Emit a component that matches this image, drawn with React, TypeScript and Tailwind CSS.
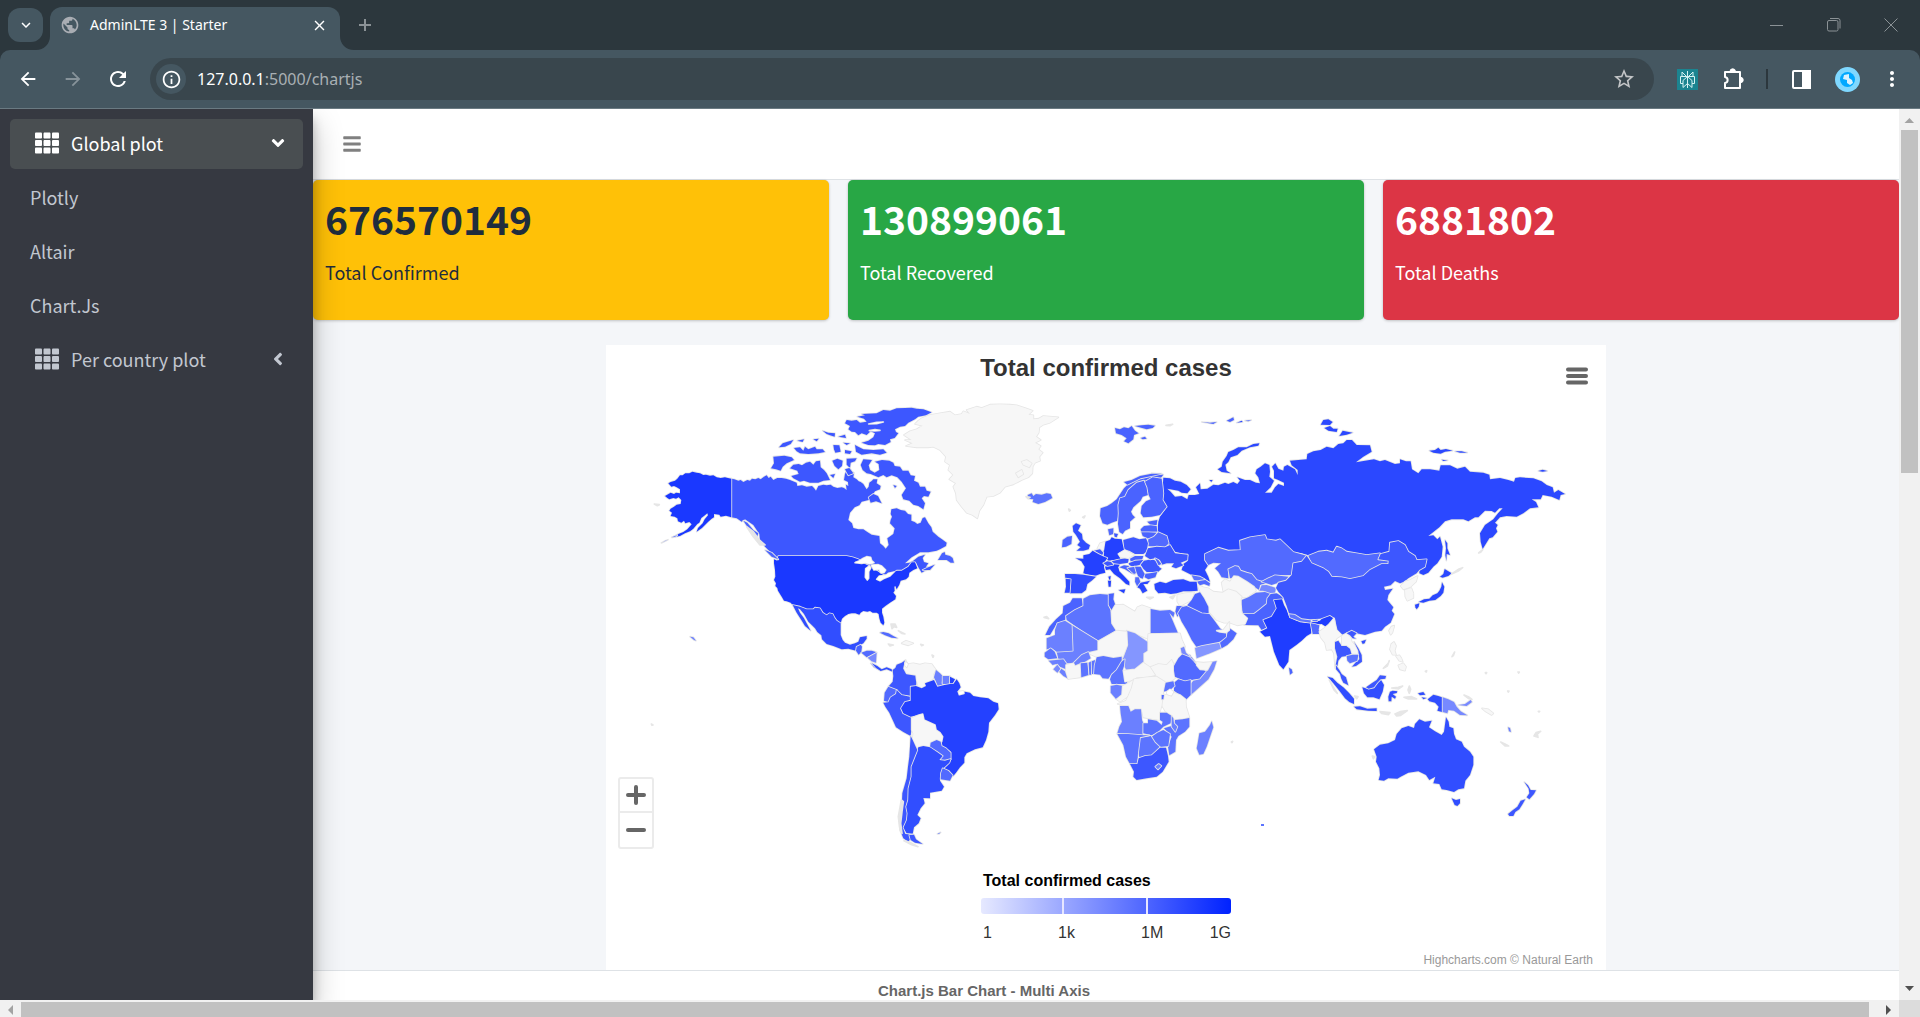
import React from "react";
import { FaAngleDown, FaAngleLeft, FaBars, FaTh } from "react-icons/fa";
import {
  MdArrowBack,
  MdArrowForward,
  MdClose,
  MdInfoOutline,
  MdKeyboardArrowDown,
  MdMoreVert,
  MdOutlineExtension,
  MdPublic,
  MdRefresh,
  MdStarBorder,
} from "react-icons/md";

/* ---------- world map data: one tile per region, three units to a pixel ---------- */

type Shape = [fill: string, points: string];
type Tile = { x: number; y: number; shapes: Shape[] };

const NONE = "#f7f7f7";
const SEA = "#ffffff";
const ISLE = "#e6e6e6";
const US = "#1a38ff";
const IN = "#1f3dff";
const BR = "#2441ff";
const RU = "#2b48ff";
const AU = "#314eff";
const CN = "#3d57ff";
const M1 = "#4a63ff";
const M2 = "#526aff";
const M3 = "#5c74ff";
const M4 = "#6b80ff";
const M5 = "#7789ff";
const M6 = "#8496ff";

const TILES: Tile[] = [
  {
    x: 600,
    y: 390,
    shapes: [
      [CN, "394,266 403,268 415,272 422,270 430,276 442,270 450,272 456,266 466,268 475,264 482,268 492,260 500,256 506,264 512,260 520,270 532,264 545,264 558,266 570,270 590,278 592,288 606,286 620,290 636,288 642,294 648,302 655,288 670,284 680,286 692,284 700,290 712,294 725,292 732,294 740,300 738,284 745,288 744,276 732,270 735,252 740,240 750,234 754,244 762,248 760,262 770,268 776,274 782,276 790,282 796,292 800,298 806,290 808,278 816,272 820,268 832,268 830,280 842,288 840,298 825,304 815,318 806,330 785,335 778,346 764,352 750,368 745,390 756,400 760,414 775,418 790,418 802,426 815,434 838,438 840,460 850,468 857,476 866,465 862,445 880,432 884,415 870,400 872,390 876,380 872,372 874,358 890,355 902,360 915,362 924,372 934,374 934,392 944,396 952,402 962,398 968,384 975,382 985,400 994,412 998,425 1015,440 1026,448 1040,458 1038,468 1020,478 1010,482 985,487 960,487 948,494 935,502 915,520 928,518 940,512 955,500 975,494 968,504 972,516 985,520 978,530 990,532 1000,526 992,538 975,542 965,548 955,532 948,518 940,530 915,540 880,550 840,570 700,540 535,508 515,490 495,470 480,450 478,432 460,405 435,388 425,395 410,385 394,382"],
      [US, "394,266 384,264 375,262 362,264 350,262 340,256 330,257 318,254 310,255 300,250 290,248 277,245 268,250 256,250 248,256 240,256 232,266 225,272 212,276 205,280 214,290 222,288 230,292 240,298 240,310 228,308 222,312 212,308 195,318 202,324 208,328 220,324 228,326 236,322 244,330 242,342 230,344 222,350 212,356 208,362 216,368 212,378 224,380 232,385 234,394 244,398 252,392 256,400 268,396 275,403 262,418 250,426 235,432 218,442 240,438 255,430 270,424 280,416 292,402 298,398 304,384 312,378 322,370 324,376 314,388 308,400 294,414 290,425 306,414 318,402 324,396 335,386 342,382 342,372 358,374 362,380 378,377 394,382"],
      [US, "535,498 740,498 758,502 775,508 795,522 812,530 850,555 870,555 890,542 905,542 925,530 935,517 945,517 952,535 940,540 928,548 926,560 918,568 902,572 898,584 890,598 886,588 883,590 884,602 880,608 888,618 886,628 870,638 856,648 846,656 846,668 850,680 853,698 850,706 842,698 838,685 836,672 830,668 818,668 810,663 802,665 790,663 782,668 778,674 766,670 755,670 745,672 735,678 726,686 722,700 710,692 704,684 698,672 688,670 680,676 668,668 660,655 645,653 640,658 620,658 600,650 578,645 572,638 560,634 552,632 546,622 540,612 534,602 532,594 526,588 528,580 522,570 526,560 525,540 522,520 522,508 532,512"],
      [SEA, "765,518 778,512 790,505 800,500 812,502 815,512 822,518 808,522 796,518 785,520"],
      [SEA, "797,536 808,528 812,534 806,545 806,565 802,570 796,562"],
      [SEA, "814,525 835,524 845,528 857,540 852,548 842,548 838,538 822,540"],
      [SEA, "830,568 838,558 858,556 865,550 882,546 870,558 850,566 840,572"],
      [AU, "578,645 600,650 620,658 640,658 645,653 660,655 668,668 680,676 688,670 698,672 704,684 710,692 722,700 722,715 722,735 728,750 735,758 750,764 765,760 775,755 780,742 800,738 800,746 790,760 776,768 770,768 768,782 745,776 725,778 700,768 680,762 666,748 664,736 652,726 645,715 636,706 625,695 612,672 600,658 594,655 600,668 612,685 620,700 632,722 615,708 604,690 590,668"],
      [M1, "768,782 770,770 782,764 786,770 784,786 776,794"],
      [M2, "784,788 800,782 815,782 830,787 812,796 800,802"],
      [M5, "803,803 830,788 828,818 815,814"],
      [AU, "812,820 826,824 835,834 848,838 838,840 822,832"],
      [M2, "840,728 850,726 866,730 880,738 893,745 875,743 855,736"],
      [NONE, "905,760 918,752 940,760 925,766"],
      [ISLE, "873,702 885,702 890,712 882,710 876,716"],
      [ISLE, "895,722 915,732 905,730"],
      [ISLE, "865,762 880,765 870,768"],
      [CN, "772,80 795,76 785,72 830,70 850,60 870,62 890,55 915,54 935,53 950,56 970,58 995,67 978,76 955,80 945,88 925,98 915,108 900,110 885,118 888,126 895,130 884,144 870,148 872,156 855,165 835,162 825,166 805,165 785,158 805,152 820,142 825,130 812,124 800,135 785,130 775,136 765,126 755,125 745,118 750,108 735,100 740,90 755,92 770,90 780,98 800,95 792,86"],
      [SEA, "806,102 830,97 850,96 830,101"],
      [SEA, "808,122 825,119 840,121 825,123"],
      [CN, "765,165 775,170 790,178 820,180 850,178 860,188 840,194 815,190 785,194 768,185"],
      [CN, "735,180 755,184 750,192 735,190"],
      [CN, "700,165 718,166 722,185 706,188 702,178"],
      [CN, "730,158 750,160 740,165"],
      [CN, "582,174 600,172 610,182 615,170 625,178 645,170 650,178 668,178 675,186 655,190 625,192 600,190 590,184"],
      [CN, "537,172 548,160 560,156 580,150 572,162 555,170"],
      [CN, "592,152 612,148 608,156"],
      [CN, "640,148 656,146 650,154"],
      [CN, "668,122 685,128 705,130 704,140 690,136 680,132"],
      [CN, "715,140 735,134 738,144"],
      [CN, "520,200 553,197 575,202 582,210 560,220 548,230 542,242 528,238 513,235 522,220"],
      [CN, "570,235 580,224 596,222 606,226 618,218 630,215 640,224 648,214 660,212 662,232 672,240 680,250 690,270 670,272 655,278 630,278 612,272 600,275 580,265 574,258 596,252 592,242"],
      [CN, "697,212 712,206 728,212 726,228 715,238 704,228"],
      [CN, "740,206 770,205 765,214 752,218 750,234 740,224"],
      [CN, "735,238 748,234 760,250 745,256"],
      [CN, "690,255 705,252 700,264"],
      [CN, "790,208 816,210 806,226 810,240 824,248 838,240 836,222 825,215 846,210 868,212 880,218 884,228 900,230 908,242 925,242 932,256 945,258 942,272 955,278 960,290 975,290 980,302 992,305 985,320 972,318 965,325 975,340 970,358 955,348 940,344 928,332 910,328 905,315 918,295 905,275 892,262 875,256 860,262 850,255 835,262 812,252 800,250 788,240 782,225"],
      [CN, "806,322 820,312 834,318 845,340 828,334 812,338"],
      [CN, "880,285 890,288 885,294"],
      [M1, "1014,510 1026,490 1034,486 1036,494 1050,498 1058,504 1062,518 1052,518 1040,510"],
      [CN, "968,540 985,532 1004,524 990,540"],
      [NONE, "912,135 930,124 950,118 968,107 945,102 955,92 965,85 990,75 1020,70 1050,65 1065,76 1085,72 1090,64 1110,72 1100,60 1130,50 1145,54 1170,44 1200,43 1230,44 1250,46 1275,54 1298,62 1285,74 1300,76 1300,88 1316,86 1330,78 1375,82 1350,98 1330,104 1318,112 1316,128 1308,140 1322,150 1305,158 1322,168 1315,178 1328,188 1318,200 1320,212 1305,218 1298,230 1297,250 1285,262 1265,270 1240,283 1215,290 1200,308 1180,318 1160,320 1150,345 1138,362 1132,385 1118,375 1100,368 1085,350 1070,330 1068,310 1060,290 1068,280 1048,268 1060,255 1045,240 1050,225 1035,215 1038,200 1020,180 1000,170 985,172 950,172 918,168 938,160 915,150 935,150"],
      [NONE, "1265,215 1280,210 1295,220 1288,232 1270,224"],
      [NONE, "1248,250 1265,240 1270,252 1255,262"],
      [M3, "1283,315 1295,310 1300,318 1308,312 1325,314 1340,310 1352,312 1357,324 1335,336 1315,342 1298,336 1300,328 1286,326"],
      [M1, "430,392 442,398 460,420 475,430 470,445 452,425"],
      [ISLE, "440,410 460,425 478,450 495,465 480,465 460,440"],
      [M1, "495,480 515,488 535,508 515,500"],
      [ISLE, "163,342 178,344 172,347"],
      [M4, "184,459 196,452 204,449"],
      [M4, "215,442 232,435 225,441"],
      [M4, "270,740 280,742 288,752 282,750"],
    ],
  },
  {
    x: 640,
    y: 540,
    shapes: [
      [AU, "695,370 712,378 725,388 740,382 755,388 758,395 740,388 722,393 708,384"],
      [CN, "797,360 785,368 770,374 766,384 758,390 760,408 758,425 745,440 770,450 785,465 810,468 812,440 828,438 830,420 828,405 800,400 792,385 792,370"],
      [NONE, "797,362 803,372 820,370 840,374 855,370 875,372 888,390 880,402 884,412 870,422 855,430 858,438 845,445 835,438 830,420 828,405 800,400 792,385"],
      [SEA, "797,366 804,372 800,382 795,376"],
      [M4, "888,390 900,400 908,408 905,430 910,436 892,440 888,425 882,412"],
      [M4, "908,408 930,408 930,432 908,432"],
      [BR, "930,410 945,418 938,432 930,432"],
      [M2, "745,440 770,450 768,462 752,472 745,487 732,482 734,458"],
      [CN, "770,450 785,465 810,470 812,482 795,486 783,505 790,520 812,530 818,545 814,570 812,588 790,576 768,562 758,540 748,518 736,500 730,488 745,487 752,472 768,462"],
      [BR, "812,440 828,438 845,445 858,438 855,430 882,420 892,440 910,436 930,432 940,432 950,418 958,430 962,442 952,455 975,455 990,458 1000,468 1020,472 1045,475 1060,485 1074,490 1076,508 1065,525 1047,548 1045,575 1038,600 1028,622 1005,628 980,640 973,652 973,668 960,682 948,698 940,708 925,692 910,685 932,662 932,635 918,625 905,618 905,590 888,570 885,555 852,540 845,522 812,530 790,520 783,505 795,486 812,482"],
      [SEA, "955,455 970,453 972,460 958,464"],
      [NONE, "815,535 835,526 848,522 852,540 885,555 888,570 900,578 908,590 905,605 890,602 875,605 870,620 850,618 835,625 828,622 818,600 820,580 815,570"],
      [M2, "872,608 890,600 902,605 905,618 918,625 932,638 932,658 915,662 898,658 908,648 890,635 870,622"],
      [AU, "835,622 850,618 870,622 890,635 908,648 898,660 915,662 932,657 928,668 910,685 902,700 900,722 912,740 905,752 870,758 870,775 850,774 854,790 842,805 832,825 842,835 836,850 822,862 818,882 800,880 788,862 798,840 800,820 796,800 802,780 803,745 812,710 812,680 822,655 828,640"],
      [M2, "908,685 925,692 938,706 930,722 902,718 903,700"],
      [CN, "812,588 818,600 828,622 832,630 822,655 812,680 812,710 803,745 802,780 796,800 800,820 798,840 788,862 796,882 820,884 805,905 790,895 780,870 778,840 785,810 787,760 800,715 804,680 808,650"],
      [ISLE, "775,830 784,780 790,785 786,815 782,850 786,880 780,870"],
      [CN, "808,885 822,884 828,898 848,912 825,908 812,900"],
      [ISLE, "792,902 812,908 834,920 815,914"],
      [M3, "892,882 902,877 897,882"],
      [ISLE, "842,313 850,315 845,317"],
      [ISLE, "876,345 881,348 879,352"],
      [ISLE, "34,552 39,555 36,556"],
    ],
  },
  {
    x: 1150,
    y: 400,
    shapes: [
      [RU, "40,233 60,235 75,242 92,245 110,255 122,268 112,280 95,278 85,272 52,266 62,275 75,290 95,288 112,298 116,285 135,285 148,282 138,262 150,250 152,268 172,266 190,254 205,256 225,248 235,252 250,246 262,252 270,242 262,232 285,240 300,240 318,248 330,250 325,232 316,220 320,208 332,200 345,190 358,195 360,215 358,230 372,242 362,262 345,278 365,278 375,262 385,252 402,258 402,248 385,240 372,235 372,212 366,200 376,190 385,206 400,212 402,200 412,195 435,208 443,225 443,210 425,196 420,182 470,178 472,162 490,154 512,150 530,140 550,145 565,132 580,130 590,120 606,120 620,135 660,136 665,155 640,170 618,187 645,182 672,178 690,184 705,180 735,192 750,190 750,178 768,184 782,184 786,208 805,220 815,208 840,208 868,212 872,196 900,196 922,206 945,200 960,215 1000,218 1018,224 1020,238 1050,234 1075,240 1092,245 1096,234 1110,232 1150,235 1175,244 1190,255 1208,262 1212,278 1225,270 1245,282 1232,285 1228,300 1205,290 1178,285 1172,298 1145,298 1158,306 1165,322 1140,325 1120,340 1100,350 1070,348 1050,352 1035,368 1043,375 1038,385 1042,395 1028,412 1018,415 998,447 992,425 990,400 1005,375 1030,358 1044,340 1058,325 1048,325 1035,338 1025,333 1005,332 985,352 975,352 955,364 940,358 905,358 885,364 868,382 835,408 850,406 862,418 870,410 878,440 875,470 862,490 850,500 835,518 820,525 808,520 808,510 825,500 830,478 800,480 795,468 775,455 765,435 745,423 720,428 718,455 700,470 690,460 650,465 620,460 590,455 575,445 560,440 550,458 530,452 505,455 475,467 455,460 430,456 405,432 390,418 378,422 350,418 345,405 300,412 270,422 272,450 235,452 205,443 165,462 165,480 175,495 165,510 175,530 180,545 160,535 125,525 95,510 100,492 112,484 115,465 75,455 62,438 48,430 45,405 22,395 25,365 30,350 50,322 38,300 38,260"],
      [RU, "885,420 892,430 892,445 900,465 890,462 889,482 886,465 888,445"],
      [RU, "203,208 215,200 218,185 230,168 235,156 250,150 265,142 290,142 310,132 328,130 325,137 300,142 275,152 262,165 242,172 235,186 226,194 230,212 242,220 215,216"],
      [RU, "178,240 188,240 184,246"],
      [RU, "512,74 520,60 535,58 548,66 540,75"],
      [RU, "523,84 540,78 550,86 563,86 560,96 535,92"],
      [RU, "568,108 578,92 608,98 590,104"],
      [RU, "838,152 855,150 865,143 872,150 888,147 908,152 885,155 872,161 850,158"],
      [RU, "915,154 935,154 952,158 930,158"],
      [RU, "875,179 893,181 880,183"],
      [RU, "1165,213 1178,209 1192,213 1178,215"],
      [M1, "155,66 180,68 200,66 190,72"],
      [M1, "230,62 250,52 252,60 240,66"],
      [RU, "260,68 275,62 278,66"],
      [M1, "285,62 304,60 295,64"],
      [M2, "165,462 205,443 235,452 272,450 270,422 300,412 345,405 350,418 378,422 390,418 405,432 430,456 470,467 455,485 430,490 425,525 400,526 375,526 355,535 335,545 320,540 305,522 290,518 272,512 265,500 235,508 235,535 215,532 205,515 195,505 213,490 190,488 175,495 165,480"],
      [M3, "235,508 255,498 265,500 272,512 290,518 305,522 320,540 335,545 350,550 330,555 328,570 312,560 290,545 265,530 240,535"],
      [NONE, "215,548 225,538 240,545 252,528 265,530 290,545 312,560 318,572 290,592 275,592 258,575 235,568 220,574"],
      [M3, "335,545 355,535 375,526 415,530 408,542 385,548 365,555 345,548"],
      [M5, "328,572 335,556 350,555 378,564 375,578 350,580 340,572"],
      [M3, "275,600 295,592 318,578 345,576 362,582 352,595 350,612 325,632 312,642 280,642 272,620"],
      [M1, "280,642 312,642 325,632 350,612 352,595 362,582 380,580 400,592 396,600 372,600 380,625 365,650 340,660 352,682 335,690 325,676 282,675 292,655"],
      [NONE, "143,555 160,562 175,565 190,575 218,578 235,568 258,575 275,590 272,600 275,640 292,655 285,672 262,676 240,668 222,668 200,660 182,640 165,620 158,600 152,580"],
      [IN, "372,600 396,598 402,615 410,630 418,652 440,662 465,668 482,666 510,662 520,650 540,645 552,655 542,668 535,685 515,672 485,675 484,700 470,708 455,722 440,734 418,750 415,785 400,808 388,795 372,755 360,708 345,710 330,695 352,685 340,660 365,650 380,625"],
      [M3, "417,640 435,642 455,655 482,656 482,668 450,664 420,652"],
      [M2, "482,670 495,672 508,676 506,690 512,702 488,702"],
      [M3, "485,656 505,655 502,663 488,663"],
      [M2, "475,467 505,455 530,452 550,458 560,440 575,445 590,455 620,460 650,465 690,460 685,478 716,482 715,492 695,492 660,510 640,528 600,537 575,532 545,530 535,515 520,505 485,490"],
      [CN, "470,467 485,490 520,505 535,515 545,530 575,532 600,537 640,528 660,510 695,492 715,492 716,482 685,478 692,462 718,455 720,428 745,423 765,435 775,455 795,468 800,480 830,478 825,500 808,510 800,520 775,535 762,545 750,550 735,543 722,556 702,560 705,570 728,566 715,585 712,600 730,622 725,632 733,642 722,668 705,680 695,692 675,695 645,705 620,700 605,692 590,700 575,705 560,690 555,655 540,645 510,656 480,658 455,655 435,642 417,640 410,618 400,592 385,575 378,564 385,548 408,542 425,525 430,490 455,485"],
      [AU, "634,724 648,719 644,730 638,732"],
      [NONE, "552,655 560,690 575,705 560,715 552,728 560,755 562,790 556,805 552,760 545,748 530,750 525,728 512,712 508,695 522,685 535,675"],
      [CN, "555,726 565,722 575,738 590,738 602,745 606,762 590,768 575,770 565,782 562,800 556,800 562,770 555,745"],
      [NONE, "575,708 590,700 602,712 605,725 622,745 625,762 608,766 602,745 590,735 576,735"],
      [CN, "590,700 605,692 620,700 610,710 618,716 608,715 600,706"],
      [CN, "612,725 625,745 635,765 636,785 618,798 606,800 618,786 628,778 625,752"],
      [M3, "590,768 608,764 625,764 622,782 600,790 592,782"],
      [NONE, "752,558 765,545 780,540 803,528 798,545 782,560 770,565 760,568"],
      [NONE, "765,570 784,564 790,580 790,594 772,602 766,590"],
      [RU, "870,530 880,522 884,507 905,520 895,528 878,533"],
      [RU, "876,547 883,560 880,578 872,588 856,600 838,602 820,608 806,606 822,598 838,596 848,586 862,580 868,572 874,560"],
      [RU, "795,614 808,610 806,620 800,628 796,622"],
      [ISLE, "905,522 925,508 938,503 925,513"],
      [ISLE, "986,459 998,449 992,457"],
      [NONE, "717,692 724,680 733,677 727,698 722,704"],
      [NONE, "720,748 724,732 732,726 738,738 734,752 738,764 728,764"],
      [NONE, "738,768 748,766 754,775 758,785 748,782"],
      [NONE, "745,796 760,790 768,800 765,812 750,808"],
      [ISLE, "700,805 715,790 718,782 712,798"],
      [M3, "125,526 150,530 164,538 150,543 132,540"],
      [M2, "140,545 152,542 166,540 180,550 178,558 162,552 150,556"],
      [RU, "13,552 30,545 48,550 70,540 100,538 120,545 140,545 143,572 125,574 100,574 80,580 62,582 45,578 25,580 15,568"],
    ],
  },
  {
    x: 1020,
    y: 400,
    shapes: [
      [M1, "240,348 242,325 262,318 275,310 290,298 302,280 312,265 325,252 345,242 360,232 380,228 395,220 430,224 422,235 395,232 385,245 372,242 350,248 325,270 315,290 300,295 295,315 296,340 292,362 275,368 262,374 248,370"],
      [M1, "312,246 335,240 360,228 395,221 425,221 395,228 362,235 345,243 322,254"],
      [M1, "285,84 300,88 312,82 325,85 335,78 345,92 356,100 342,105 340,118 325,130 312,124 320,115 305,105 288,100"],
      [M1, "345,78 365,76 385,74 405,77 398,84 380,88 358,82"],
      [M1, "362,114 375,110 380,116 368,118"],
      [ISLE, "438,76 458,73 450,77"],
      [ISLE, "18,290 30,292 24,296"],
      [M1, "350,248 372,242 382,262 384,285 368,290 362,302 340,322 333,335 338,345 345,352 330,365 330,385 315,392 308,402 298,396 294,372 296,340 295,315 300,295 315,290 325,270"],
      [M1, "375,245 388,238 398,232 425,236 428,260 430,280 428,300 440,320 420,345 395,350 370,352 362,340 365,318 378,304 392,298 386,285 382,262"],
      [M2, "264,388 280,385 280,402 268,406"],
      [CN, "282,400 294,402 290,412 284,410"],
      [AU, "158,378 168,370 182,376 174,392 186,402 188,418 198,428 210,436 206,448 190,452 170,452 182,442 172,435 180,425 168,405 160,395"],
      [M1, "128,420 142,410 156,408 154,432 138,440 126,442"],
      [ISLE, "188,352 195,348 192,354"],
      [ISLE, "146,327 151,331 148,333"],
      [M1, "382,365 412,360 410,376 392,376"],
      [M1, "362,388 372,378 392,376 410,378 412,395 385,397 364,396"],
      [M1, "364,397 385,397 410,398 402,410 385,416 368,408"],
      [M2, "384,430 385,418 402,410 415,397 440,408 446,430 435,442 382,438"],
      [CN, "310,420 340,412 358,418 378,415 384,430 380,455 370,462 345,462 328,452 312,450"],
      [BR, "255,425 270,420 275,412 285,416 305,418 312,450 295,460 302,478 265,482 252,472 250,445"],
      [NONE, "232,446 240,430 254,425 250,450"],
      [CN, "222,452 240,448 250,458 246,466"],
      [BR, "167,475 190,476 190,466 208,462 218,452 235,462 252,470 262,474 254,486 252,500 256,518 240,522 225,528 205,524 190,520 194,500 184,484"],
      [BR, "265,530 272,528 270,545"],
      [AU, "135,522 165,522 190,524 228,530 215,542 202,552 198,570 185,580 150,580 152,538 136,535"],
      [AU, "137,536 152,538 149,578 134,578 138,560"],
      [BR, "255,500 268,494 285,490 300,492 295,502 298,514 312,528 328,545 328,556 318,552 300,535 282,522 270,508 258,510"],
      [BR, "296,570 316,568 312,580"],
      [BR, "264,542 273,542 272,560 266,560"],
      [CN, "250,490 262,484 274,486 280,494 262,498"],
      [CN, "275,484 300,478 315,474 326,478 324,488 300,492 282,490"],
      [NONE, "295,462 315,450 342,464 325,474 302,472"],
      [M1, "330,476 345,468 370,468 366,480 332,484"],
      [CN, "326,490 345,482 370,480 360,494 340,500 328,496"],
      [CN, "362,494 372,482 395,478 412,484 418,502 425,506 414,516 380,516 370,506"],
      [M1, "372,522 390,520 412,516 406,532 385,538 374,532"],
      [M1, "298,502 312,496 328,498 322,504 345,524 334,520 315,508"],
      [M2, "322,504 345,500 350,518 342,522"],
      [M1, "345,500 362,500 374,522 368,536 356,532 350,518"],
      [M2, "346,532 356,532 362,548 352,560 345,545"],
      [RU, "352,562 362,548 390,542 382,552 370,552 382,572 368,580 360,566"],
      [ISLE, "380,592 400,592 390,597"],
      [ISLE, "450,592 465,586 458,596"],
      [CN, "375,468 384,445 410,440 435,442 450,435 465,460 503,464 502,480 482,488 490,496 468,505 455,500 462,490 440,490 425,494 420,480 405,475 390,478"],
      [M1, "405,475 415,480 424,492 416,496"],
      [NONE, "472,585 495,580 522,577 515,600 480,618 472,605"],
      [M1, "515,600 525,582 540,577 552,595 565,620 566,640 545,642 500,618"],
      [M2, "470,618 482,618 500,618 485,632 472,650 466,635"],
    ],
  },
  {
    x: 1020,
    y: 580,
    shapes: [
      [M2, "474,100 485,82 500,78 545,100 568,102 582,120 600,145 618,158 620,172 600,188 560,196 530,202 515,180 500,150 485,125"],
      [M6, "525,204 545,198 600,188 605,205 570,220 530,235"],
      [M2, "600,188 620,172 625,142 650,160 640,178 622,195 605,205"],
      [NONE, "590,152 610,150 628,126 628,150 618,158 600,156"],
      [M1, "158,55 185,55 190,78 165,90 138,108 135,122 112,128 90,165 76,165 88,140 108,118 128,100 130,78 150,68"],
      [M3, "190,56 210,46 240,42 265,44 266,75 274,100 276,130 290,150 235,182 200,162 140,120 138,108 165,90 190,78"],
      [M1, "266,42 282,40 280,58 286,75 276,92 266,75"],
      [NONE, "286,75 310,74 345,95 352,82 366,76 392,85 392,180 345,160 320,152 290,152 276,130 274,95"],
      [M3, "392,87 420,92 450,90 464,98 460,112 448,98 470,150 474,160 392,160"],
      [NONE, "385,162 480,160 485,178 495,200 485,225 465,250 455,240 440,255 415,252 390,262 370,248 370,220 382,210"],
      [NONE, "390,262 415,252 440,255 455,240 462,258 462,272 465,295 450,305 435,306 410,290 400,275"],
      [M2, "462,258 475,235 490,220 510,225 525,250 555,272 560,274 540,298 512,300 495,304 465,290 462,272"],
      [M5, "482,205 492,200 498,218 528,248 515,232 485,220"],
      [M5, "512,345 512,312 520,302 540,298 560,274 575,246 590,243 582,268 565,298 535,325"],
      [NONE, "530,246 550,248 575,246 562,270 540,268 530,256"],
      [M2, "462,308 475,298 495,304 512,300 512,345 495,362 480,345 462,332"],
      [M3, "430,310 460,304 464,318 450,330 430,335"],
      [SEA, "440,336 450,328 460,335 456,348 444,350"],
      [NONE, "428,342 440,345 455,350 462,338 480,345 497,358 498,380 508,412 488,416 465,418 440,400 425,375"],
      [M6, "320,152 345,160 382,185 382,212 370,220 370,248 345,268 320,272 310,252 308,235 322,200"],
      [NONE, "232,185 290,152 320,155 322,195 308,232 280,232 250,228 232,232 205,220 232,210"],
      [M4, "155,135 232,182 232,210 205,216 185,225 160,250 135,250 130,238 115,236 110,215 158,212"],
      [M4, "80,175 105,165 105,150 112,130 135,122 155,135 158,212 110,215 95,205 80,208"],
      [M3, "74,218 92,205 104,215 112,235 85,238 74,230"],
      [M4, "86,242 130,238 140,252 138,268 120,260 108,252 98,255"],
      [M5, "100,268 112,254 122,268 112,278"],
      [M4, "118,276 124,266 138,276 145,296 130,288"],
      [NONE, "138,255 160,250 180,256 180,292 145,297 138,275"],
      [M4, "162,248 185,225 205,216 212,235 195,245 180,250 166,256"],
      [M3, "182,250 202,248 206,285 184,292"],
      [M3, "206,248 214,244 214,284 208,284"],
      [M3, "215,244 226,240 222,282 216,282"],
      [M3, "230,232 250,228 280,234 305,230 305,245 290,270 275,282 265,296 248,295 240,284 222,282 224,256"],
      [M3, "305,245 314,238 312,258 308,270 318,290 322,312 275,312 270,298 275,284 290,270"],
      [NONE, "310,272 345,268 370,248 390,262 405,285 380,292 350,292 340,300 315,305"],
      [M4, "272,318 290,314 308,318 306,345 288,357 272,338"],
      [NONE, "308,318 325,310 340,300 335,325 325,348 300,365 290,358 306,345"],
      [NONE, "293,372 318,362 325,348 335,325 342,298 380,292 410,290 435,306 430,330 425,375 420,395 420,420 385,415 370,412 365,388 330,392 325,378"],
      [M2, "425,345 432,345 430,358 425,358"],
      [M4, "300,378 325,378 332,395 345,388 363,388 366,420 370,430 368,465 325,462 292,460 298,440 306,425 302,400"],
      [M3, "370,430 384,430 384,418 410,422 425,435 428,425 420,420 420,398 440,398 455,408 452,430 430,440 412,458 395,466 370,460"],
      [M3, "465,420 488,418 508,414 508,440 495,455 475,468 468,480 466,515 448,526 444,500 455,470 432,445 462,436"],
      [M4, "455,408 460,415 462,430 472,440 466,455 455,440"],
      [M3, "395,470 412,458 430,450 450,462 445,498 420,502 405,488"],
      [M3, "360,472 392,468 405,488 420,502 395,526 375,528 360,536 354,520"],
      [M3, "292,462 325,462 370,466 388,466 360,472 354,520 352,552 330,552 318,530 310,495"],
      [CN, "330,552 352,552 356,535 375,528 395,526 420,503 438,503 444,528 446,545 428,575 410,590 380,595 350,600 340,590 342,575"],
      [M4, "406,560 416,552 424,558 414,568"],
      [M4, "533,490 538,460 555,455 570,435 575,424 580,442 572,465 560,500 550,522 538,524 530,505"],
      [ISLE, "72,112 80,110 86,116"],
      [ISLE, "634,486 638,484 636,488"],
    ],
  },
  {
    x: 1280,
    y: 600,
    shapes: [
      [AU, "282,448 300,434 325,430 345,420 350,402 365,385 385,378 402,384 405,372 418,358 435,365 455,362 447,382 465,394 485,405 492,395 498,352 506,365 508,380 520,385 522,402 528,418 545,425 552,440 570,455 580,470 580,495 570,525 556,542 552,565 535,568 522,576 500,570 485,568 478,552 460,550 466,530 448,540 438,525 415,514 385,518 362,530 352,536 325,535 312,542 296,540 300,525 298,505 288,485 290,470"],
      [AU, "515,595 528,600 540,597 540,610 532,618 524,615"],
      [CN, "733,546 744,556 752,570 768,571 762,582 748,598 740,592 748,580 746,566"],
      [CN, "684,642 696,632 712,620 722,602 736,598 728,612 718,628 706,636 700,648 688,648"],
      [AU, "143,230 158,234 172,248 190,262 208,280 222,296 222,312 208,306 195,295 178,272 160,250"],
      [AU, "222,320 240,319 262,326 290,325 290,333 265,332 230,328"],
      [CN, "168,196 178,210 185,222 198,232 205,256 190,248 184,236 180,222 168,208"],
      [AU, "247,262 262,266 282,262 292,248 302,238 312,255 308,275 298,298 280,292 262,292 252,280"],
      [CN, "258,262 275,250 290,240 300,226 318,228 316,236 302,238 292,248 282,262 266,266"],
      [AU, "325,290 330,275 338,272 352,274 350,279 338,282 348,290 345,296 335,290 334,304 326,304"],
      [AU, "443,298 460,284 475,288 486,292 486,336 472,332 476,320 465,308 448,304"],
      [M5, "488,292 505,298 522,306 530,320 542,334 562,346 540,345 522,332 505,330 502,340 488,336"],
      [AU, "414,280 430,276 436,284 420,286"],
      [AU, "425,292 440,294 430,298"],
      [ISLE, "335,264 355,262 368,258 355,267"],
      [ISLE, "372,292 395,290 410,297 385,297"],
      [M5, "535,315 555,312 572,300 576,306 560,318"],
      [ISLE, "552,285 565,290 576,298 565,295"],
      [ISLE, "300,335 330,338 325,344 305,340"],
      [ISLE, "345,342 360,335 382,332 362,346 350,348"],
      [NONE, "606,325 625,328 640,340 635,345 615,333"],
      [ISLE, "388,258 392,268 388,280 384,270"],
      [M4, "684,382 690,384 693,396 687,394"],
      [ISLE, "662,426 675,432 686,438 675,438"],
      [ISLE, "762,408 768,398 782,394 772,402 774,412"],
      [M1, "27,203 35,208 38,218 30,224"],
      [ISLE, "148,240 160,262 172,280 162,270"],
      [ISLE, "224,288 234,290 230,296"],
      [ISLE, "277,468 284,470 280,476"],
      [ISLE, "516,170 524,156 520,167"],
      [ISLE, "616,218 620,218 618,221"],
      [ISLE, "714,216 718,216 716,219"],
      [ISLE, "683,273 687,273 685,276"],
      [ISLE, "775,334 779,334 777,336"],
      [ISLE, "436,214 440,212 439,216"],
    ],
  },
];

function WorldMap() {
  return (
    <svg viewBox="606 395 1000 460" className="block w-full" role="img" aria-label="World map of total confirmed cases">
      {TILES.map((t, i) => (
        <g key={i} transform={`translate(${t.x} ${t.y}) scale(0.33333)`} stroke="#e6e6e6" strokeWidth="5" strokeLinejoin="round" paintOrder="stroke">
          {t.shapes.map(([fill, points], j) => (
            <polygon key={j} fill={fill} points={points} />
          ))}
        </g>
      ))}
      <path d="M1261 825h3" stroke="#5c74ff" strokeWidth="2" />
    </svg>
  );
}

/* ---------- browser chrome ---------- */

const iconBtn = "flex h-8 w-8 items-center justify-center rounded-full";

function TabStrip() {
  return (
    <div className="flex h-[50px] items-end bg-[#2c373d]">
      <button aria-label="Search tabs" className="mb-2 ml-2 flex h-[34px] w-[35px] items-center justify-center rounded-xl bg-[#455761] text-white">
        <MdKeyboardArrowDown size={18} />
      </button>
      <svg width="14" height="14" className="-ml-[7px]" aria-hidden="true">
        <path d="M14 0v14H0C8 14 14 8 14 0Z" fill="#455761" />
      </svg>
      <div className="flex h-[43px] w-[290px] items-center rounded-t-xl bg-[#455761] pr-3 pb-[7px] pl-[10px] text-white">
        <MdPublic size={20} className="shrink-0 text-[#a9adb3]" />
        <span className="ml-[10px] flex-1 font-['Noto_Sans',sans-serif] text-sm whitespace-nowrap">AdminLTE 3 | Starter</span>
        <button aria-label="Close tab">
          <MdClose size={17} />
        </button>
      </div>
      <svg width="14" height="14" aria-hidden="true">
        <path d="M0 0v14h14C6 14 0 8 0 0Z" fill="#455761" />
      </svg>
      <button aria-label="New tab" className="mb-[18px] ml-1 text-[#8b9296]">
        <svg width="14" height="14" stroke="currentColor" strokeWidth="2">
          <path d="M7 1v12M1 7h12" />
        </svg>
      </button>
      <div className="mb-[18px] ml-auto flex items-center gap-[43px] pr-[22px] text-[#8b9296]">
        <button aria-label="Minimise">
          <svg width="14" height="14" stroke="currentColor">
            <path d="M0 7.500h13" />
          </svg>
        </button>
        <button aria-label="Restore">
          <svg width="14" height="14" stroke="currentColor" fill="none">
            <rect x=".5" y="2.500" width="10.500" height="10.500" rx="1.500" />
            <path d="M3 .5h8a2 2 0 0 1 2 2v8" />
          </svg>
        </button>
        <button aria-label="Close">
          <svg width="14" height="14" stroke="currentColor">
            <path d="m.5.5 13 13m0-13-13 13" />
          </svg>
        </button>
      </div>
    </div>
  );
}

function Toolbar() {
  return (
    <div className="bg-[#2c373d]">
      <div className="flex h-[59px] items-center rounded-t-[10px] border-b border-[#6a7a82] bg-[#455761] pr-4 pl-3 text-white">
        <div className="flex gap-[13px]">
          <button aria-label="Back" className={iconBtn}>
            <MdArrowBack size={22} />
          </button>
          <button aria-label="Forward" className={iconBtn + " text-[#87939a]"}>
            <MdArrowForward size={22} />
          </button>
          <button aria-label="Reload" className={iconBtn}>
            <MdRefresh size={24} />
          </button>
        </div>
        <div className="ml-4 flex h-[42px] flex-1 items-center rounded-full bg-[#39464d] pr-[18px] pl-[6px]">
          <button aria-label="Site information" className="flex h-[30px] w-[30px] items-center justify-center rounded-full bg-[#455761]">
            <MdInfoOutline size={21} />
          </button>
          <span className="ml-[11px] flex-1 font-['Noto_Sans',sans-serif] text-base">
            127.0.0.1<span className="text-[#a9b0b4]">:5000/chartjs</span>
          </span>
          <button aria-label="Bookmark" className="text-[#c3c5c7]">
            <MdStarBorder size={24} />
          </button>
        </div>
        <button aria-label="Extension" className="ml-[23px]">
          <svg width="21" height="21" viewBox="0 0 21 21" fill="none" stroke="#d5f3f3">
            <rect width="21" height="21" fill="#1b8490" stroke="none" />
            <path d="M10.500 2v17M5 3l5.500 5.500L16 3v5M5 3v5M3.500 7.500h14v7h-2.500v4l-4.500-4-4.500 4v-4H3.500ZM6 14.500v-3l4.500-4 4.500 4v3" />
          </svg>
        </button>
        <button aria-label="Extensions" className="ml-[23px]">
          <svg width="24" height="24" viewBox="0 0 24 24" fill="none" stroke="currentColor" strokeWidth="2" strokeLinejoin="round">
            <path d="M4 5h15v16H4v-5c3.500-.5 3.500-5.500 0-6Z" />
            <path d="M9 4.500a2.700 2.700 0 0 1 5.400 0ZM19.500 10.300a2.700 2.700 0 0 1 0 5.400Z" fill="currentColor" strokeWidth="1" />
          </svg>
        </button>
        <span className="ml-[21px] h-5 w-[2px] bg-[#2c373d]" />
        <button aria-label="Side panel" className="ml-6">
          <svg width="19" height="19" fill="none" stroke="currentColor" strokeWidth="2">
            <rect x="1" y="1" width="17" height="17" rx="1" />
            <path d="M11 1h7v17h-7z" fill="currentColor" />
          </svg>
        </button>
        <button aria-label="Profile" className="ml-6">
          <svg width="25" height="25">
            <circle cx="12.500" cy="12.500" r="12.500" fill="#7fd8ff" />
            <circle cx="12.500" cy="12.500" r="7.500" fill="#00a8ff" />
            <path d="m9 8 5-1v4l3 2 1 3-3 2-3-2v-3l-4-1Z" fill="#d9f2ff" />
          </svg>
        </button>
        <button aria-label="Menu" className="ml-5">
          <MdMoreVert size={24} />
        </button>
      </div>
    </div>
  );
}

/* ---------- dashboard ---------- */

const navItem = "flex h-[50px] items-center rounded-[5px] px-5 pb-[2px] text-[#c2c7d0]";

function Sidebar() {
  return (
    <nav className="z-10 w-[313px] shrink-0 bg-[#363941] px-[10px] pt-[10px] text-lg shadow-[0_14px_28px_rgba(0,0,0,.25),0_10px_10px_rgba(0,0,0,.22)]">
      <ul className="flex flex-col gap-1">
        <li>
          <a href="#" className="flex h-[50px] items-center rounded-[5px] bg-[#494e51] pr-[15px] pb-[2px] pl-[25px] text-white">
            <FaTh size={24} />
            <span className="ml-3 flex-1">Global plot</span>
            <FaAngleDown size={20} />
          </a>
        </li>
        <li>
          <a href="#" className={navItem}>Plotly</a>
        </li>
        <li>
          <a href="#" className={navItem}>Altair</a>
        </li>
        <li>
          <a href="#" className={navItem}>Chart.Js</a>
        </li>
        <li>
          <a href="#" className="flex h-[50px] items-center rounded-[5px] pr-[15px] pb-[2px] pl-[25px] text-[#c2c7d0]">
            <FaTh size={24} />
            <span className="ml-3 flex-1">Per country plot</span>
            <FaAngleLeft size={20} />
          </a>
        </li>
      </ul>
    </nav>
  );
}

function StatBox({ value, label, tone }: { value: string; label: string; tone: string }) {
  return (
    <div className={"h-[140px] flex-1 rounded-[5px] px-3 pt-[11px] shadow-[0_0_1px_rgba(0,0,0,.13),0_1px_3px_rgba(0,0,0,.2)] " + tone}>
      <h3 className="text-[39px] leading-[54px] font-bold">{value}</h3>
      <p className="mt-[13px] text-lg leading-7">{label}</p>
    </div>
  );
}

function ConfirmedMap() {
  return (
    <section className="relative mx-auto mt-[25px] flex w-full max-w-[1000px] flex-1 flex-col bg-white font-['Liberation_Sans',Arial,sans-serif] text-[#333]">
      <h2 className="h-[50px] pt-2 text-center text-2xl leading-[30px] font-bold">Total confirmed cases</h2>
      <button aria-label="View chart menu" className="absolute top-[22px] right-[18px]">
        <svg width="22" height="18" stroke="#666" strokeWidth="4" strokeLinecap="round">
          <path d="M2 2.500h18M2 9h18M2 15.500h18" />
        </svg>
      </button>
      <WorldMap />
      <div className="absolute top-[432px] left-3 flex w-9 flex-col rounded-[3px] border-2 border-[#ebebeb] bg-white">
        <button aria-label="Zoom in" className="flex h-[34px] items-center justify-center border-b-2 border-[#ebebeb]">
          <svg width="20" height="20" stroke="#666" strokeWidth="4" strokeLinecap="round">
            <path d="M10 2v16M2 10h16" />
          </svg>
        </button>
        <button aria-label="Zoom out" className="flex h-[34px] items-center justify-center">
          <svg width="20" height="20" stroke="#666" strokeWidth="4" strokeLinecap="round">
            <path d="M2 10h16" />
          </svg>
        </button>
      </div>
      <div className="mx-auto mt-4 w-[250px] text-base">
        <h4 className="pl-[2px] leading-5 font-bold text-black">Total confirmed cases</h4>
        <div className="mt-[7px] grid h-4 grid-cols-3 divide-x-2 divide-[#e6e6ff] rounded-[3px] bg-linear-to-r/srgb from-[#e6e9ff] to-[#0022ff]">
          <span />
          <span />
          <span />
        </div>
        <div className="mt-[9px] grid grid-cols-[75px_83px_1fr_auto] pl-[2px] leading-5">
          <span>1</span>
          <span>1k</span>
          <span>1M</span>
          <span>1G</span>
        </div>
      </div>
      <p className="mt-auto pr-[13px] pb-[2px] text-right text-xs leading-4 text-[#999]">Highcharts.com © Natural Earth</p>
    </section>
  );
}

export default function App() {
  return (
    <div className="flex h-screen flex-col overflow-hidden font-['Noto_Sans_CJK_SC',sans-serif]">
      <header>
        <TabStrip />
        <Toolbar />
      </header>
      <div className="flex min-h-0 flex-1 overflow-hidden">
        <Sidebar />
        <main className="flex min-w-0 flex-1 flex-col bg-[#f4f6f9]">
          <div className="flex h-[71px] items-center border-b border-[#dee2e6] bg-white pl-[29px]">
            <button aria-label="Toggle sidebar" className="text-[#808080]">
              <FaBars size={20} />
            </button>
          </div>
          <div className="flex gap-[19px]">
            <StatBox value="676570149" label="Total Confirmed" tone="bg-[#ffc107] text-[#1f2d3d]" />
            <StatBox value="130899061" label="Total Recovered" tone="bg-[#28a745] text-white" />
            <StatBox value="6881802" label="Total Deaths" tone="bg-[#dc3545] text-white" />
          </div>
          <ConfirmedMap />
          <footer className="h-[30px] border-t border-[#dee2e6] bg-white">
            <p className="w-[1342px] max-w-full pt-[10px] text-center font-['Liberation_Sans',Arial,sans-serif] text-[15px] leading-5 font-bold text-[#666]">
              Chart.js Bar Chart - Multi Axis
            </p>
          </footer>
        </main>
        <div className="flex w-[21px] flex-col items-center bg-[#f1f1f1]">
          <svg width="21" height="21">
            <path d="m5.500 14 5-5 4.500 5Z" fill="#a3a3a3" />
          </svg>
          <div className="h-[343px] w-[17px] bg-[#c1c1c1]" />
          <svg width="21" height="21" className="mt-auto">
            <path d="m6 7 4.500 5L15 7Z" fill="#505050" />
          </svg>
        </div>
      </div>
      <div className="flex h-[17px] bg-[#f1f1f1]">
        <svg width="21" height="17">
          <path d="m13 5-5 5 5 5Z" fill="#a3a3a3" />
        </svg>
        <div className="mt-[2px] flex-1 bg-[#c1c1c1]" />
        <svg width="30" height="17">
          <path d="m17 5 5 5-5 5Z" fill="#505050" />
        </svg>
        <div className="w-[21px] bg-[#dcdcdc]" />
      </div>
    </div>
  );
}
